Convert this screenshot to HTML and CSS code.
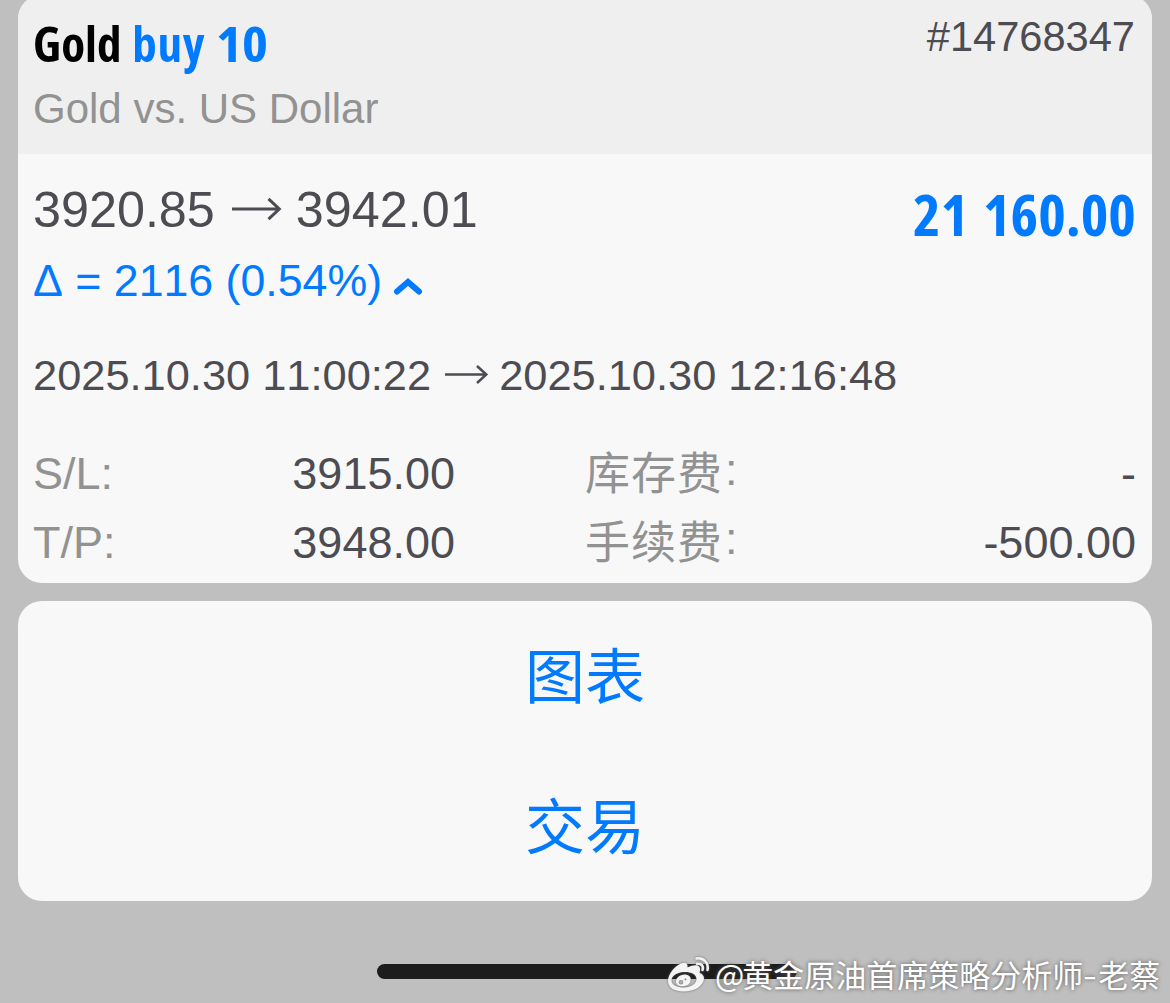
FILE: index.html
```html
<!DOCTYPE html>
<html lang="zh-CN">
<head>
<meta charset="utf-8">
<title>Gold buy 10</title>
<link rel="stylesheet" href="styles.css">
</head>
<body>
<main class="screen">
  <section class="card position">
    <header class="head">
      <div class="head-main">
        <div class="title">Gold <span class="blue"><span class="side">buy</span> <span class="volume">10</span></span></div>
        <div class="subtitle">Gold vs. US Dollar</div>
      </div>
      <div class="ticket">#14768347</div>
    </header>
    <div class="body">
      <div class="summary">
        <div>
          <div class="prices">
            <span>3920.85</span>
            <svg class="arrow" width="50" height="24" viewBox="0 0 50 24"><path d="M0 11H47M36.500 0.800L47.300 11L36.500 21.200"/></svg>
            <span>3942.01</span>
          </div>
          <div class="delta">
            <span>Δ = 2116 (0.54%)</span>
            <svg class="chevron" width="28" height="20" viewBox="0 0 28 20"><path d="M3 14.500L14 5L25 14.500"/></svg>
          </div>
        </div>
        <div class="profit">21 160.00</div>
      </div>
      <div class="times">
        <span>2025.10.30 11:00:22</span>
        <svg class="arrow" width="44" height="20" viewBox="0 0 44 20"><path d="M0 9.500H41M32 1L41.300 9.500L32 18"/></svg>
        <span>2025.10.30 12:16:48</span>
      </div>
      <div class="details">
        <span class="label">S/L:</span><span class="value">3915.00</span><span class="label cjk">库存费<span class="colon">:</span></span><span class="value">-</span>
        <span class="label">T/P:</span><span class="value">3948.00</span><span class="label cjk">手续费<span class="colon">:</span></span><span class="value">-500.00</span>
      </div>
    </div>
  </section>
  <section class="card actions">
    <div class="action">图表</div>
    <div class="action">交易</div>
  </section>
  <footer class="foot">
    <div class="home-bar"></div>
    <div class="watermark">
      <svg class="weibo" width="44" height="38" viewBox="0 0 44 38">
        <path fill="#f4f4f4" fill-rule="evenodd" d="M1 26C1 19 8 11 14 8.500C19 6.500 21 9 20.500 12.500C26 10 31 9.500 32.500 12C33.500 14 33 16 32.500 18C36 19 38 22 36.500 26C34 33 25 36.500 17 36.500C8 36.500 1 33 1 26ZM16.500 17C9.500 17.500 4.500 21 4.500 25.500C4.500 30 10 32.500 17 32.500C24 32.500 29.500 28.500 29.500 24C29.500 19 23.500 16.500 16.500 17Z"/>
        <path fill="#f4f4f4" fill-rule="evenodd" d="M17.500 19.500C23 19.500 25 23.500 23 27.500C21 31.500 14 32.500 10.500 30C6.500 26 10.500 20 17.500 19.500ZM14 25A2.300 2.300 0 1 0 14 29.600A2.300 2.300 0 1 0 14 25ZM18.500 23.500A0.900 0.900 0 1 0 18.500 25.300A0.900 0.900 0 1 0 18.500 23.500Z"/>
        <path class="wave" d="M29.500 3.500C36.500 2.500 42 8 40.500 15M30 8.800C34 8 37 11 35.500 15"/>
      </svg>
      <span class="author"><span class="at">@</span>黄金原油首席策略分析师<span class="dash">-</span>老蔡</span>
    </div>
  </footer>
</main>
</body>
</html>
```
FILE: styles.css
```css
* { box-sizing: border-box; }
body {
  margin: 0;
  background: #bfbfbf;
  font-family: "Liberation Sans", "Noto Sans CJK SC", sans-serif;
  font-kerning: none;
  color: #4d4c52;
}
.screen { width: 1170px; height: 1003px; padding: 0 18px; overflow: hidden; display: flex; flex-direction: column; }
.card { flex: none; border-radius: 24px; background: #f8f8f8; overflow: hidden; }
.position { height: 588px; margin-top: -5px; }
.head { height: 159px; padding: 15px 17px 0 15px; background: #efefef; display: flex; justify-content: space-between; }
.title { font: 700 49px/66px "Open Sans", sans-serif; font-stretch: 75%; color: #000; white-space: nowrap; word-spacing: 2px; }
.side { letter-spacing: 0.700px; }
.volume { display: inline-block; transform: scaleX(1.130); transform-origin: left; }
.blue, .delta, .profit, .action { color: #007aff; }
.subtitle { margin-top: 9px; font-size: 42px; line-height: 48px; color: #929292; white-space: nowrap; }
.ticket { margin-top: 2px; font-size: 41.600px; line-height: 50px; }
.body { padding: 25px 16px 0 15px; }
.summary { display: flex; justify-content: space-between; height: 158px; }
.prices { display: flex; align-items: center; font-size: 50.300px; line-height: 62px; }
.prices .arrow { margin: 0 14px 0 17px; }
.arrow, .chevron { fill: none; stroke: currentColor; stroke-width: 3; flex: none; }
.delta { margin-top: 10px; display: flex; align-items: center; font-size: 44.700px; line-height: 60px; }
.chevron { margin: 11px 0 0 12px; stroke-width: 6; stroke-linecap: round; }
.profit { font: 700 57px/70px "Open Sans", sans-serif; font-stretch: 75%; word-spacing: 4px; white-space: nowrap; transform: scaleX(1.032); transform-origin: right; }
.times { margin-top: 8px; display: flex; align-items: center; height: 60px; font-size: 43.400px; }
.times .arrow { margin: 0 10px 0 14px; stroke-width: 2.500; }
.details { margin-top: 34px; display: grid; grid-template-columns: 200px 222px 200px 1fr; grid-auto-rows: 69px; line-height: 69px; font-size: 45px; white-space: nowrap; }
.value { text-align: right; }
.label { color: #929292; }
.label.cjk { padding-left: 130px; letter-spacing: 1px; position: relative; top: 1px; }
.colon { position: relative; top: -5px; margin-left: 2px; }
.actions { height: 300px; margin-top: 18px; }
.action { height: 150px; line-height: 143px; text-align: center; font-size: 60px; font-family: "Noto Sans CJK SC", sans-serif; }
.foot { position: relative; height: 102px; }
.home-bar { position: absolute; left: 359px; top: 63px; width: 420px; height: 15px; border-radius: 8px; background: #1c1c1c; }
.watermark { position: absolute; left: 649px; top: 53px; display: flex; align-items: center; color: #fff; white-space: nowrap; font: 31px/40px "Noto Sans CJK SC", sans-serif; text-shadow: 0 0 4px #555; }
.weibo { filter: drop-shadow(0 0 1px #666); flex: none; }
.wave { fill: none; stroke: #f4f4f4; stroke-width: 2.500; stroke-linecap: round; }
.author { margin-left: 4px; }
.at { margin-right: -2px; }
.dash { display: inline-block; width: 15px; transform: scaleX(1.300); transform-origin: left; }
```
